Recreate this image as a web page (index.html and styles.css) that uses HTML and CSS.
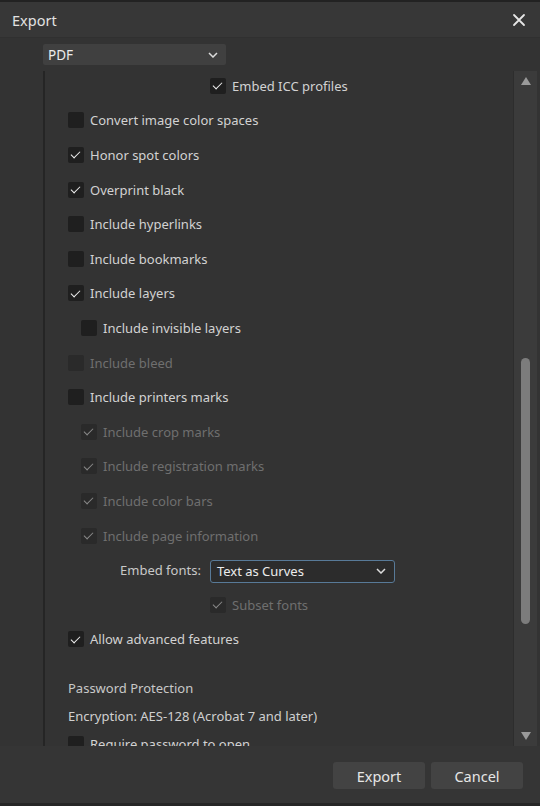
FILE: index.html
```html
<!DOCTYPE html>
<html>
<head>
<meta charset="utf-8">
<link rel="stylesheet" href="styles.css">
</head>
<body>
<div class="dialog">
  <div class="titlebar">
    <span class="title">Export</span>
    <svg class="close" width="14" height="14" viewBox="0 0 14 14"><path d="M2 2L12 12M12 2L2 12" stroke="#e6e6e6" stroke-width="1.8" stroke-linecap="round"/></svg>
  </div>
  <div class="formatrow">
    <div class="select fmt"><span>PDF</span><svg class="chev" width="10" height="6" viewBox="0 0 10 6"><path d="M1 1L5 5L9 1" stroke="#dcdcdc" stroke-width="1.5" fill="none"/></svg></div>
  </div>
  <div class="scrollwrap">
    <div class="content">
      <div class="row ind-icc"><span class="cb on"></span><span class="lbl">Embed ICC profiles</span></div>
      <div class="row"><span class="cb"></span><span class="lbl">Convert image color spaces</span></div>
      <div class="row"><span class="cb on"></span><span class="lbl">Honor spot colors</span></div>
      <div class="row"><span class="cb on"></span><span class="lbl">Overprint black</span></div>
      <div class="row"><span class="cb"></span><span class="lbl">Include hyperlinks</span></div>
      <div class="row"><span class="cb"></span><span class="lbl">Include bookmarks</span></div>
      <div class="row"><span class="cb on"></span><span class="lbl">Include layers</span></div>
      <div class="row ind1"><span class="cb"></span><span class="lbl">Include invisible layers</span></div>
      <div class="row dis"><span class="cb"></span><span class="lbl">Include bleed</span></div>
      <div class="row"><span class="cb"></span><span class="lbl">Include printers marks</span></div>
      <div class="row ind1 dis"><span class="cb on"></span><span class="lbl">Include crop marks</span></div>
      <div class="row ind1 dis"><span class="cb on"></span><span class="lbl">Include registration marks</span></div>
      <div class="row ind1 dis"><span class="cb on"></span><span class="lbl">Include color bars</span></div>
      <div class="row ind1 dis"><span class="cb on"></span><span class="lbl">Include page information</span></div>
      <div class="row fontsrow"><span class="flabel">Embed fonts:</span><div class="select fsel"><span>Text as Curves</span><svg class="chev" width="10" height="6" viewBox="0 0 10 6"><path d="M1 1L5 5L9 1" stroke="#dcdcdc" stroke-width="1.5" fill="none"/></svg></div></div>
      <div class="row ind-icc dis"><span class="cb on"></span><span class="lbl">Subset fonts</span></div>
      <div class="row"><span class="cb on"></span><span class="lbl">Allow advanced features</span></div>
      <div class="heading">Password Protection</div>
      <div class="textline">Encryption: AES-128 (Acrobat 7 and later)</div>
      <div class="row short"><span class="cb"></span><span class="lbl">Require password to open</span></div>
    </div>
    <div class="scrollbar">
      <div class="arrow up"></div>
      <div class="track"><div class="thumb"></div></div>
      <div class="arrow down"></div>
    </div>
  </div>
  <div class="footer">
    <button class="btn">Export</button>
    <button class="btn">Cancel</button>
  </div>
</div>
</body>
</html>
```
FILE: styles.css
```css
* { box-sizing: border-box; }
html, body { margin: 0; padding: 0; background: #1e1e1e; }
body { font-family: "Noto Sans", "Open Sans", sans-serif; }
.dialog {
  width: 540px; height: 806px;
  background: #333333;
  border-top: 2px solid #222222;
  border-bottom: 3px solid #262626;
  display: flex; flex-direction: column;
  overflow: hidden;
}
.titlebar {
  height: 36px; flex: none;
  background: #373737;
  display: flex; align-items: center; justify-content: space-between;
  padding: 0 14px 0 12px;
  border-bottom: 1px solid #303030;
}
.title { color: #e2e2e2; font-size: 14.5px; }
.close { display: block; }
.formatrow { flex: none; padding: 6px 0 0 43px; height: 33px; }
.select {
  display: flex; align-items: center; justify-content: space-between;
  color: #ececec; font-size: 13px;
}
.fmt { width: 183px; height: 21px; background: #404040; padding: 0 8px 0 5px; border-radius: 2px; font-size: 13.5px; }
.scrollwrap {
  flex: none; height: 675px;
  margin-left: 43px; margin-right: 3px;
  display: flex;
}
.content {
  flex: 1; border-left: 2px solid #252525;
  overflow: hidden;
  padding-left: 23px;
}
.row {
  height: 34.6px; display: flex; align-items: center; gap: 6px;
  color: #d2d2d2; font-size: 13px; white-space: nowrap;
}
.row:first-child { margin-top: -2.5px; }
.ind1 { padding-left: 13px; }
.ind-icc { padding-left: 142px; }
.cb {
  width: 16px; height: 16px; flex: none;
  background: #1f1f1f; border-radius: 2px;
  position: relative;
}
.cb.on::after {
  content: ""; position: absolute;
  left: 5px; top: 2.5px; width: 4px; height: 8px;
  border: solid #f0f0f0; border-width: 0 1.6px 1.6px 0;
  transform: rotate(45deg);
}
.dis { color: #6f6f6f; }
.dis .cb { background: #2a2a2a; }
.dis .cb.on::after { border-color: #8a8a8a; }
.fontsrow { padding-left: 52px; gap: 9px; }
.flabel { color: #c8c8c8; }
.fsel {
  width: 185px; height: 23px;
  background: #2c2c2c;
  border: 1px solid #587a98;
  border-radius: 3px;
  padding: 0 8px 0 6px;
  margin-top: 2px;
}
.heading { color: #c8c8c8; font-size: 13px; margin-top: 21px; height: 20px; line-height: 20px; }
.textline { color: #d0d0d0; font-size: 13px; margin-top: 8px; height: 20px; line-height: 20px; }
.short { height: 30px; margin-top: 3px; }
.scrollbar {
  width: 24px; flex: none;
  background: #3b3b3b;
  border-left: 1px solid #2d2d2d;
  display: flex; flex-direction: column; align-items: center;
}
.arrow { width: 0; height: 0; flex: none; }
.arrow.up { margin-top: 6px; border-left: 5px solid transparent; border-right: 5px solid transparent; border-bottom: 8px solid #9a9a9a; }
.arrow.down { margin-bottom: 6px; border-left: 5px solid transparent; border-right: 5px solid transparent; border-top: 8px solid #9a9a9a; }
.track { flex: 1; width: 100%; padding-top: 273px; display: flex; justify-content: center; }
.thumb { width: 9px; height: 266px; background: #7c7c7c; border-radius: 5px; }
.footer {
  flex: 1; display: flex; justify-content: flex-end; align-items: center; gap: 6px;
  padding: 2px 17px 0 0;
  background: #353535;
}
.btn {
  width: 92px; height: 27px;
  background: #434343; color: #e6e6e6;
  border: none; border-radius: 3px;
  font-family: "Noto Sans", sans-serif; font-size: 14.5px;
  padding: 0;
}
```
